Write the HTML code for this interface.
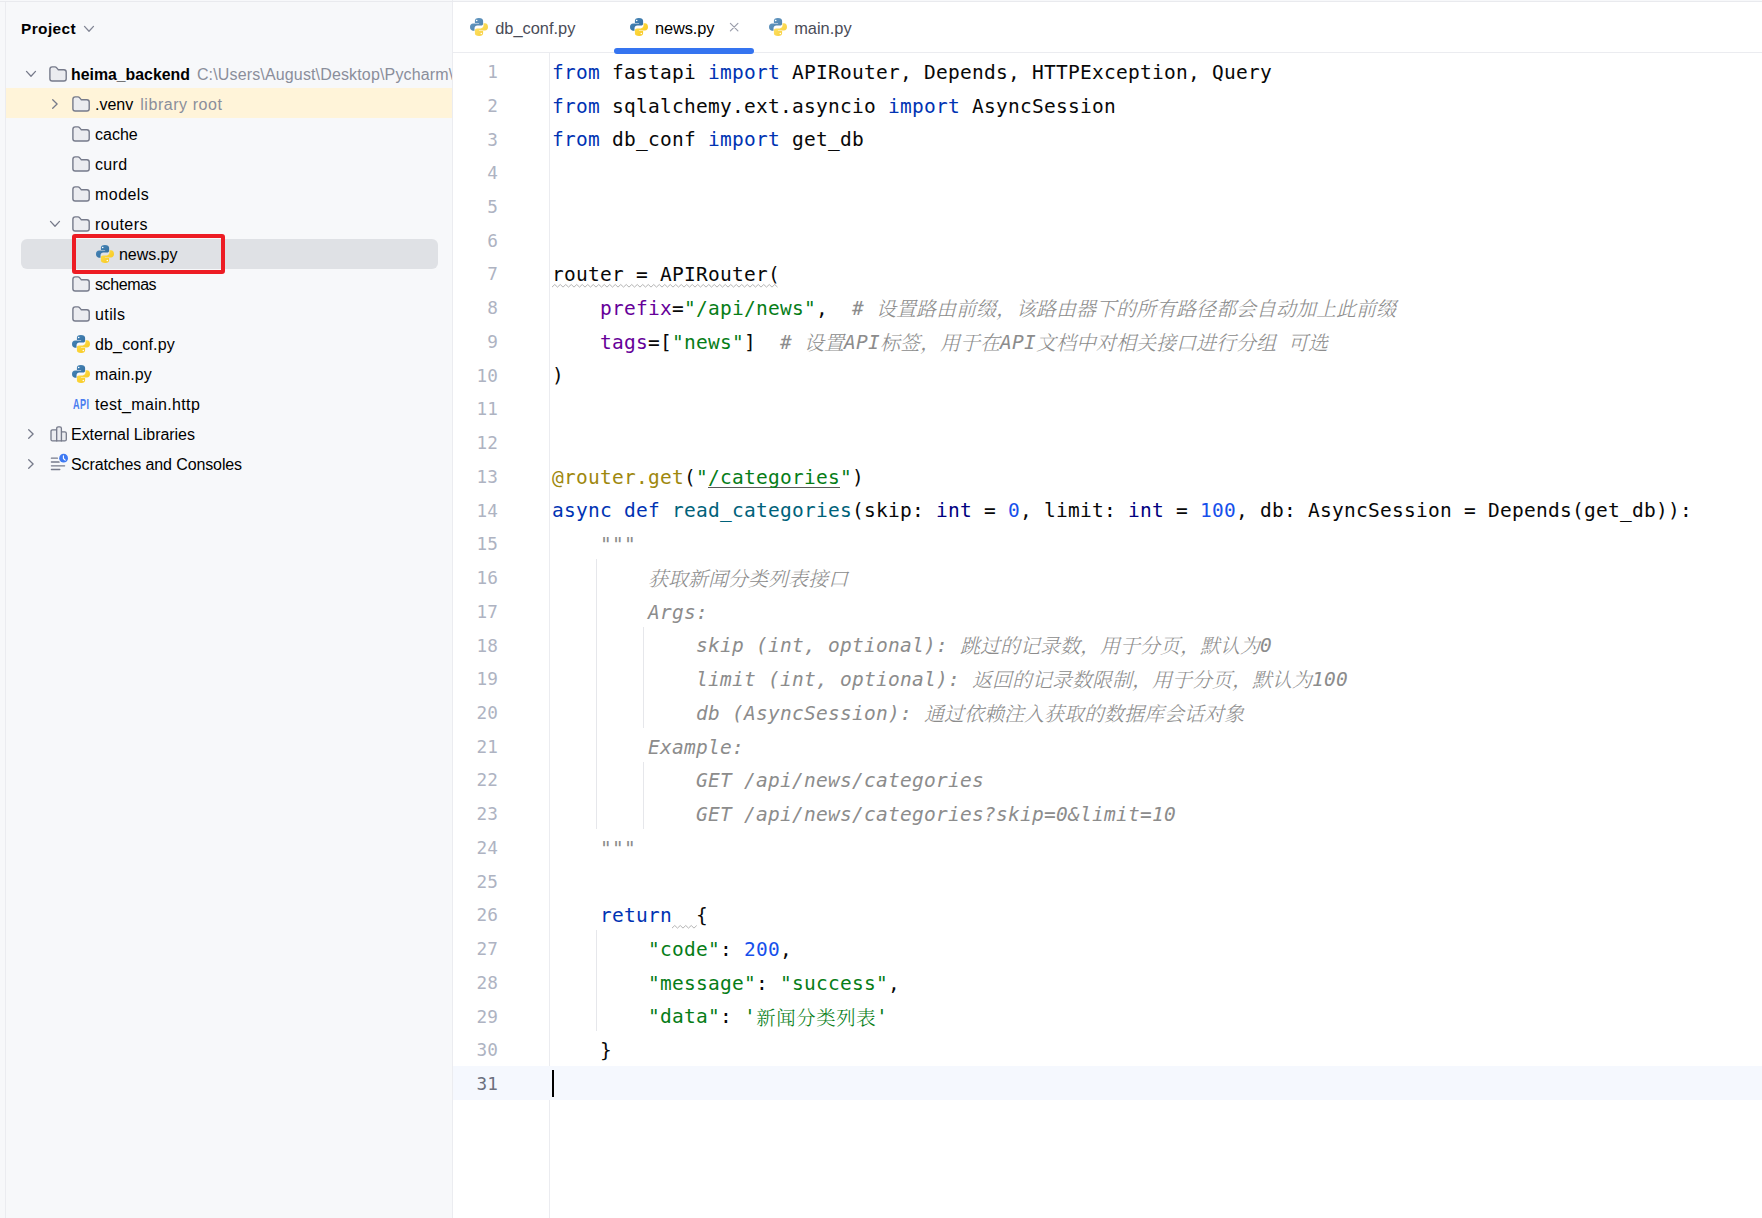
<!DOCTYPE html>
<html lang="zh"><head><meta charset="utf-8"><title>news.py</title>
<style>
*{box-sizing:border-box;margin:0;padding:0}
html,body{width:1762px;height:1218px;overflow:hidden;background:#f7f8fa}
body{position:relative;font-family:"Liberation Sans","Noto Sans CJK SC",sans-serif;color:#000}
#side{position:absolute;left:0;top:0;width:453px;height:1218px;background:#f7f8fa;overflow:hidden}
#side .lb{position:absolute;left:5px;top:2px;width:1px;height:1216px;background:#ebecf0}
#topline{position:absolute;left:0;top:1px;width:1762px;height:1px;background:#e9eaee;z-index:5}
#split{position:absolute;left:452px;top:0;width:1px;height:1218px;background:#ebecf0}
.hdr{position:absolute;left:21px;top:14.2px;font-size:15.4px;font-weight:bold;line-height:30px;letter-spacing:0.42px}
.venv{position:absolute;left:6px;top:88px;width:446px;height:30px;background:#fff4d9}
.sel{position:absolute;left:21px;top:238.5px;width:417px;height:30px;background:#dfe1e5;border-radius:6px}
.red{position:absolute;left:72px;top:234px;width:152.8px;height:40px;border:4px solid #ed1c24;border-radius:3px}
.ic{position:absolute;display:block;overflow:visible}
.tt{position:absolute;font-size:16px;line-height:30px;white-space:nowrap;height:30px}
.tt b{font-weight:bold;font-size:15.85px}
.gr{color:#8a8e9b}
.api{position:absolute;font-size:14.7px;line-height:20px;color:#4a7df0;transform:scaleX(0.62);transform-origin:0 50%;font-weight:bold;letter-spacing:0.6px}
#ed{position:absolute;left:453px;top:2px;width:1309px;height:1216px;background:#fff}
#tabs{position:absolute;left:453px;top:2px;width:1309px;height:51px;border-bottom:1px solid #ebecf0;background:#fff}
.tab{position:absolute;top:13.4px;font-size:16.4px;line-height:30px;color:#494b57;white-space:nowrap}
.tab.act{color:#000}
.ul{position:absolute;left:613.5px;top:48px;width:140.5px;height:6px;border-radius:3px;background:#3574f0}
#gl{position:absolute;left:549px;top:53px;width:1px;height:1165px;background:#ebecf0}
.curline{position:absolute;left:453px;top:1066px;width:1309px;height:33.7px;background:#f5f8fe}
.caret{position:absolute;left:552px;top:1070px;width:2px;height:26.5px;background:#000}
.ln{position:absolute;left:453px;width:45.1px;text-align:right;font-family:"DejaVu Sans Mono","Liberation Mono",monospace;font-size:17.7px;letter-spacing:0.15px;line-height:33.733px;height:33.733px;color:#aeb3c2}
.ln.cur{color:#6c707e}
.cl{position:absolute;left:552px;font-family:"DejaVu Sans Mono","Liberation Mono",monospace;font-size:19.5px;letter-spacing:0.2600px;line-height:33.733px;height:33.733px;white-space:pre;color:#080808}
.k{color:#0033b3}.s,.su{color:#067d17}.su{text-decoration:underline #5a5a5a;text-decoration-thickness:1px;text-underline-offset:3px;text-decoration-skip-ink:none}
.n{color:#1750eb}.d{color:#9e880d}.f{color:#00627a}.p{color:#660099}.b{color:#000080}
.c{color:#8c8c8c;font-style:italic}
.z{color:#8c8c8c;font-style:italic;font-family:"Liberation Serif","Noto Serif CJK SC",serif;font-size:20px;letter-spacing:0;line-height:0;position:relative;top:1.4px;font-weight:300}
.g{color:#067d17;font-family:"Liberation Serif","Noto Serif CJK SC",serif;font-size:19.4px;letter-spacing:0.6px;line-height:0;position:relative;top:2px;left:0.3px;font-weight:300}
.guide{position:absolute;width:1px;background:#e6e7eb}
</style></head><body>
<svg width="0" height="0" style="position:absolute"><defs>
<linearGradient id="pyb" x1="0" y1="0" x2="1" y2="1"><stop offset="0" stop-color="#4b8bbe"/><stop offset="1" stop-color="#306998"/></linearGradient>
<linearGradient id="pyy" x1="0" y1="0" x2="1" y2="1"><stop offset="0" stop-color="#ffe052"/><stop offset="1" stop-color="#f6c416"/></linearGradient>
</defs></svg>
<div id="side">
<div class="lb"></div>
<div class="hdr">Project</div>
<svg class="ic" style="left:81.5px;top:22px" width="14" height="14" viewBox="0 0 14 14"><path d="M2.5 4.4 L7 9.2 L11.5 4.4" fill="none" stroke="#818594" stroke-width="1.3" stroke-linecap="round" stroke-linejoin="round"/></svg>
<div class="venv"></div>
<div class="sel"></div>
<svg class="ic" style="left:24px;top:67px" width="14" height="14" viewBox="0 0 14 14"><path d="M2.5 4.4 L7 9.2 L11.5 4.4" fill="none" stroke="#767a8a" stroke-width="1.3" stroke-linecap="round" stroke-linejoin="round"/></svg>
<svg class="ic" style="left:49px;top:65px" width="18" height="18" viewBox="0 0 18 18"><path d="M0.9 4.2 Q0.9 1.9 3.2 1.9 H6 Q6.9 1.9 7.5 2.6 L9 4.4 Q9.3 4.7 9.8 4.7 H14.9 Q17.2 4.7 17.2 7 V13.7 Q17.2 16 14.9 16 H3.2 Q0.9 16 0.9 13.7 Z" fill="#ebecf0" stroke="#767a8a" stroke-width="1.4"/></svg>
<div class="tt" style="left:71px;top:60px"><b>heima_backend</b><span class="gr" style="margin-left:7px;letter-spacing:0.15px">C:\Users\August\Desktop\Pycharm\</span></div>
<svg class="ic" style="left:47.9px;top:97px" width="14" height="14" viewBox="0 0 14 14"><path d="M4.7 2.7 L9.1 7 L4.7 11.3" fill="none" stroke="#767a8a" stroke-width="1.3" stroke-linecap="round" stroke-linejoin="round"/></svg>
<svg class="ic" style="left:72px;top:95px" width="18" height="18" viewBox="0 0 18 18"><path d="M0.9 4.2 Q0.9 1.9 3.2 1.9 H6 Q6.9 1.9 7.5 2.6 L9 4.4 Q9.3 4.7 9.8 4.7 H14.9 Q17.2 4.7 17.2 7 V13.7 Q17.2 16 14.9 16 H3.2 Q0.9 16 0.9 13.7 Z" fill="#ebecf0" stroke="#767a8a" stroke-width="1.4"/></svg>
<div class="tt" style="left:95px;top:90px">.venv<span class="gr" style="margin-left:7px;letter-spacing:0.55px">library root</span></div>
<svg class="ic" style="left:72px;top:125px" width="18" height="18" viewBox="0 0 18 18"><path d="M0.9 4.2 Q0.9 1.9 3.2 1.9 H6 Q6.9 1.9 7.5 2.6 L9 4.4 Q9.3 4.7 9.8 4.7 H14.9 Q17.2 4.7 17.2 7 V13.7 Q17.2 16 14.9 16 H3.2 Q0.9 16 0.9 13.7 Z" fill="#ebecf0" stroke="#767a8a" stroke-width="1.4"/></svg>
<div class="tt" style="left:95px;top:120px">cache</div>
<svg class="ic" style="left:72px;top:155px" width="18" height="18" viewBox="0 0 18 18"><path d="M0.9 4.2 Q0.9 1.9 3.2 1.9 H6 Q6.9 1.9 7.5 2.6 L9 4.4 Q9.3 4.7 9.8 4.7 H14.9 Q17.2 4.7 17.2 7 V13.7 Q17.2 16 14.9 16 H3.2 Q0.9 16 0.9 13.7 Z" fill="#ebecf0" stroke="#767a8a" stroke-width="1.4"/></svg>
<div class="tt" style="left:95px;top:150px;letter-spacing:0.3px">curd</div>
<svg class="ic" style="left:72px;top:185px" width="18" height="18" viewBox="0 0 18 18"><path d="M0.9 4.2 Q0.9 1.9 3.2 1.9 H6 Q6.9 1.9 7.5 2.6 L9 4.4 Q9.3 4.7 9.8 4.7 H14.9 Q17.2 4.7 17.2 7 V13.7 Q17.2 16 14.9 16 H3.2 Q0.9 16 0.9 13.7 Z" fill="#ebecf0" stroke="#767a8a" stroke-width="1.4"/></svg>
<div class="tt" style="left:95px;top:180px;letter-spacing:0.45px">models</div>
<svg class="ic" style="left:48.1px;top:217px" width="14" height="14" viewBox="0 0 14 14"><path d="M2.5 4.4 L7 9.2 L11.5 4.4" fill="none" stroke="#767a8a" stroke-width="1.3" stroke-linecap="round" stroke-linejoin="round"/></svg>
<svg class="ic" style="left:72px;top:215px" width="18" height="18" viewBox="0 0 18 18"><path d="M0.9 4.2 Q0.9 1.9 3.2 1.9 H6 Q6.9 1.9 7.5 2.6 L9 4.4 Q9.3 4.7 9.8 4.7 H14.9 Q17.2 4.7 17.2 7 V13.7 Q17.2 16 14.9 16 H3.2 Q0.9 16 0.9 13.7 Z" fill="#ebecf0" stroke="#767a8a" stroke-width="1.4"/></svg>
<div class="tt" style="left:95px;top:210px;letter-spacing:0.45px">routers</div>
<svg class="ic" style="left:96px;top:245px;opacity:1" width="18" height="18" viewBox="0 0 18 18"><path d="M8.9 0 C6 0 4.9 1.2 4.9 2.8 V4.9 H9.1 V5.6 H3.1 C1.2 5.6 0 7 0 9.1 C0 11.2 1.1 12.7 2.9 12.7 H4.5 V10.4 C4.5 8.8 5.8 7.6 7.3 7.6 H11 C12.3 7.6 13.1 6.7 13.1 5.4 V2.8 C13.1 1.1 11.7 0 8.9 0 Z" fill="url(#pyb)"/><path d="M9.1 18 C12 18 13.1 16.8 13.1 15.2 V13.1 H8.9 V12.4 H14.9 C16.8 12.4 18 11 18 8.9 C18 6.8 16.9 5.3 15.1 5.3 H13.5 V7.6 C13.5 9.2 12.2 10.4 10.7 10.4 H7 C5.7 10.4 4.9 11.3 4.9 12.6 V15.2 C4.9 16.9 6.3 18 9.1 18 Z" fill="url(#pyy)"/><circle cx="6.7" cy="2.5" r="0.8" fill="#fff"/><circle cx="11.3" cy="15.5" r="0.8" fill="#fff"/></svg>
<div class="tt" style="left:119px;top:240px;letter-spacing:-0.05px">news.py</div>
<svg class="ic" style="left:72px;top:275px" width="18" height="18" viewBox="0 0 18 18"><path d="M0.9 4.2 Q0.9 1.9 3.2 1.9 H6 Q6.9 1.9 7.5 2.6 L9 4.4 Q9.3 4.7 9.8 4.7 H14.9 Q17.2 4.7 17.2 7 V13.7 Q17.2 16 14.9 16 H3.2 Q0.9 16 0.9 13.7 Z" fill="#ebecf0" stroke="#767a8a" stroke-width="1.4"/></svg>
<div class="tt" style="left:95px;top:270px;letter-spacing:-0.4px">schemas</div>
<svg class="ic" style="left:72px;top:305px" width="18" height="18" viewBox="0 0 18 18"><path d="M0.9 4.2 Q0.9 1.9 3.2 1.9 H6 Q6.9 1.9 7.5 2.6 L9 4.4 Q9.3 4.7 9.8 4.7 H14.9 Q17.2 4.7 17.2 7 V13.7 Q17.2 16 14.9 16 H3.2 Q0.9 16 0.9 13.7 Z" fill="#ebecf0" stroke="#767a8a" stroke-width="1.4"/></svg>
<div class="tt" style="left:95px;top:300px;letter-spacing:0.4px">utils</div>
<svg class="ic" style="left:72px;top:335px;opacity:1" width="18" height="18" viewBox="0 0 18 18"><path d="M8.9 0 C6 0 4.9 1.2 4.9 2.8 V4.9 H9.1 V5.6 H3.1 C1.2 5.6 0 7 0 9.1 C0 11.2 1.1 12.7 2.9 12.7 H4.5 V10.4 C4.5 8.8 5.8 7.6 7.3 7.6 H11 C12.3 7.6 13.1 6.7 13.1 5.4 V2.8 C13.1 1.1 11.7 0 8.9 0 Z" fill="url(#pyb)"/><path d="M9.1 18 C12 18 13.1 16.8 13.1 15.2 V13.1 H8.9 V12.4 H14.9 C16.8 12.4 18 11 18 8.9 C18 6.8 16.9 5.3 15.1 5.3 H13.5 V7.6 C13.5 9.2 12.2 10.4 10.7 10.4 H7 C5.7 10.4 4.9 11.3 4.9 12.6 V15.2 C4.9 16.9 6.3 18 9.1 18 Z" fill="url(#pyy)"/><circle cx="6.7" cy="2.5" r="0.8" fill="#fff"/><circle cx="11.3" cy="15.5" r="0.8" fill="#fff"/></svg>
<div class="tt" style="left:95px;top:330px;letter-spacing:0.16px">db_conf.py</div>
<svg class="ic" style="left:72px;top:365px;opacity:1" width="18" height="18" viewBox="0 0 18 18"><path d="M8.9 0 C6 0 4.9 1.2 4.9 2.8 V4.9 H9.1 V5.6 H3.1 C1.2 5.6 0 7 0 9.1 C0 11.2 1.1 12.7 2.9 12.7 H4.5 V10.4 C4.5 8.8 5.8 7.6 7.3 7.6 H11 C12.3 7.6 13.1 6.7 13.1 5.4 V2.8 C13.1 1.1 11.7 0 8.9 0 Z" fill="url(#pyb)"/><path d="M9.1 18 C12 18 13.1 16.8 13.1 15.2 V13.1 H8.9 V12.4 H14.9 C16.8 12.4 18 11 18 8.9 C18 6.8 16.9 5.3 15.1 5.3 H13.5 V7.6 C13.5 9.2 12.2 10.4 10.7 10.4 H7 C5.7 10.4 4.9 11.3 4.9 12.6 V15.2 C4.9 16.9 6.3 18 9.1 18 Z" fill="url(#pyy)"/><circle cx="6.7" cy="2.5" r="0.8" fill="#fff"/><circle cx="11.3" cy="15.5" r="0.8" fill="#fff"/></svg>
<div class="tt" style="left:95px;top:360px;letter-spacing:0.13px">main.py</div>
<div class="api" style="left:73.3px;top:394.3px">API</div>
<div class="tt" style="left:95px;top:390px;letter-spacing:0.33px">test_main.http</div>
<svg class="ic" style="left:23.6px;top:427px" width="14" height="14" viewBox="0 0 14 14"><path d="M4.7 2.7 L9.1 7 L4.7 11.3" fill="none" stroke="#767a8a" stroke-width="1.3" stroke-linecap="round" stroke-linejoin="round"/></svg>
<svg class="ic" style="left:49px;top:425px" width="18" height="18" viewBox="0 0 18 18"><g fill="#ebecf0" stroke="#767a8a" stroke-width="1.3" stroke-linejoin="round"><path d="M7.7 4.9 H3.5 Q2 4.9 2 6.4 V14.4 Q2 15.9 3.5 15.9 H7.7 Z"/><path d="M12.4 6.8 H15.8 Q17.3 6.8 17.3 8.3 V14.4 Q17.3 15.9 15.8 15.9 H12.4 Z"/><path d="M7.7 15.9 V3.4 Q7.7 1.9 9.2 1.9 H10.9 Q12.4 1.9 12.4 3.4 V15.9 Z"/></g></svg>
<div class="tt" style="left:71px;top:420px;letter-spacing:-0.03px">External Libraries</div>
<svg class="ic" style="left:23.6px;top:457px" width="14" height="14" viewBox="0 0 14 14"><path d="M4.7 2.7 L9.1 7 L4.7 11.3" fill="none" stroke="#767a8a" stroke-width="1.3" stroke-linecap="round" stroke-linejoin="round"/></svg>
<svg class="ic" style="left:49px;top:455px" width="18" height="18" viewBox="0 0 18 18"><g stroke="#767a8a" stroke-width="1.3" stroke-linecap="round"><path d="M2.4 3.2H8.4M2.4 7H10.2M2.4 10.8H15.6M2.4 14.5H10.8"/></g><circle cx="14.6" cy="3.2" r="5.2" fill="#f7f8fa"/><circle cx="14.6" cy="3.2" r="4.4" fill="#3f7af3"/><path d="M14.4 0.8 V3.5 L16.2 5.2" fill="none" stroke="#fff" stroke-width="1.1" stroke-linecap="round" stroke-linejoin="round"/></svg>
<div class="tt" style="left:71px;top:450px;letter-spacing:-0.11px">Scratches and Consoles</div>
<div class="red"></div>
</div>
<div id="split"></div>
<div id="ed"></div>
<div id="tabs"></div>
<svg class="ic" style="left:470px;top:18px;opacity:0.85" width="18" height="18" viewBox="0 0 18 18"><path d="M8.9 0 C6 0 4.9 1.2 4.9 2.8 V4.9 H9.1 V5.6 H3.1 C1.2 5.6 0 7 0 9.1 C0 11.2 1.1 12.7 2.9 12.7 H4.5 V10.4 C4.5 8.8 5.8 7.6 7.3 7.6 H11 C12.3 7.6 13.1 6.7 13.1 5.4 V2.8 C13.1 1.1 11.7 0 8.9 0 Z" fill="url(#pyb)"/><path d="M9.1 18 C12 18 13.1 16.8 13.1 15.2 V13.1 H8.9 V12.4 H14.9 C16.8 12.4 18 11 18 8.9 C18 6.8 16.9 5.3 15.1 5.3 H13.5 V7.6 C13.5 9.2 12.2 10.4 10.7 10.4 H7 C5.7 10.4 4.9 11.3 4.9 12.6 V15.2 C4.9 16.9 6.3 18 9.1 18 Z" fill="url(#pyy)"/><circle cx="6.7" cy="2.5" r="0.8" fill="#fff"/><circle cx="11.3" cy="15.5" r="0.8" fill="#fff"/></svg>
<div class="tab" style="left:495.2px">db_conf.py</div>
<svg class="ic" style="left:630px;top:18px;opacity:1" width="18" height="18" viewBox="0 0 18 18"><path d="M8.9 0 C6 0 4.9 1.2 4.9 2.8 V4.9 H9.1 V5.6 H3.1 C1.2 5.6 0 7 0 9.1 C0 11.2 1.1 12.7 2.9 12.7 H4.5 V10.4 C4.5 8.8 5.8 7.6 7.3 7.6 H11 C12.3 7.6 13.1 6.7 13.1 5.4 V2.8 C13.1 1.1 11.7 0 8.9 0 Z" fill="url(#pyb)"/><path d="M9.1 18 C12 18 13.1 16.8 13.1 15.2 V13.1 H8.9 V12.4 H14.9 C16.8 12.4 18 11 18 8.9 C18 6.8 16.9 5.3 15.1 5.3 H13.5 V7.6 C13.5 9.2 12.2 10.4 10.7 10.4 H7 C5.7 10.4 4.9 11.3 4.9 12.6 V15.2 C4.9 16.9 6.3 18 9.1 18 Z" fill="url(#pyy)"/><circle cx="6.7" cy="2.5" r="0.8" fill="#fff"/><circle cx="11.3" cy="15.5" r="0.8" fill="#fff"/></svg>
<div class="tab act" style="left:655px;letter-spacing:-0.1px">news.py</div>
<svg class="ic" style="left:727px;top:20px" width="14" height="14" viewBox="0 0 14 14"><path d="M3.4 3.4 L10.9 10.9 M10.9 3.4 L3.4 10.9" fill="none" stroke="#9a9dab" stroke-width="1.2" stroke-linecap="round"/></svg>
<svg class="ic" style="left:769px;top:18px;opacity:0.85" width="18" height="18" viewBox="0 0 18 18"><path d="M8.9 0 C6 0 4.9 1.2 4.9 2.8 V4.9 H9.1 V5.6 H3.1 C1.2 5.6 0 7 0 9.1 C0 11.2 1.1 12.7 2.9 12.7 H4.5 V10.4 C4.5 8.8 5.8 7.6 7.3 7.6 H11 C12.3 7.6 13.1 6.7 13.1 5.4 V2.8 C13.1 1.1 11.7 0 8.9 0 Z" fill="url(#pyb)"/><path d="M9.1 18 C12 18 13.1 16.8 13.1 15.2 V13.1 H8.9 V12.4 H14.9 C16.8 12.4 18 11 18 8.9 C18 6.8 16.9 5.3 15.1 5.3 H13.5 V7.6 C13.5 9.2 12.2 10.4 10.7 10.4 H7 C5.7 10.4 4.9 11.3 4.9 12.6 V15.2 C4.9 16.9 6.3 18 9.1 18 Z" fill="url(#pyy)"/><circle cx="6.7" cy="2.5" r="0.8" fill="#fff"/><circle cx="11.3" cy="15.5" r="0.8" fill="#fff"/></svg>
<div class="tab" style="left:794.2px">main.py</div>
<div class="ul"></div>
<div id="gl"></div>
<div class="curline"></div>
<div class="guide" style="left:596px;top:559px;height:270px"></div>
<div class="guide" style="left:643px;top:627px;height:101px"></div>
<div class="guide" style="left:643px;top:762px;height:67px"></div>
<div class="guide" style="left:596px;top:930px;height:101px"></div>
<div class="ln" style="top:56px">1</div>
<div class="cl" style="top:56px"><span class="k">from</span> fastapi <span class="k">import</span> APIRouter, Depends, HTTPException, Query</div>
<div class="ln" style="top:90px">2</div>
<div class="cl" style="top:90px"><span class="k">from</span> sqlalchemy.ext.asyncio <span class="k">import</span> AsyncSession</div>
<div class="ln" style="top:124px">3</div>
<div class="cl" style="top:123px"><span class="k">from</span> db_conf <span class="k">import</span> get_db</div>
<div class="ln" style="top:157px">4</div>
<div class="ln" style="top:191px">5</div>
<div class="ln" style="top:225px">6</div>
<div class="ln" style="top:258px">7</div>
<div class="cl" style="top:258px">router = APIRouter(</div>
<div class="ln" style="top:292px">8</div>
<div class="cl" style="top:292px">    <span class="p">prefix</span>=<span class="s">"/api/news"</span>,  <span class="c"># </span><span class="z">设置路由前缀，该路由器下的所有路径都会自动加上此前缀</span></div>
<div class="ln" style="top:326px">9</div>
<div class="cl" style="top:326px">    <span class="p">tags</span>=[<span class="s">"news"</span>]  <span class="c"># </span><span class="z">设置</span><span class="c">API</span><span class="z">标签，用于在</span><span class="c">API</span><span class="z">文档中对相关接口进行分组</span><span class="c"> </span><span class="z">可选</span></div>
<div class="ln" style="top:360px">10</div>
<div class="cl" style="top:359px">)</div>
<div class="ln" style="top:393px">11</div>
<div class="ln" style="top:427px">12</div>
<div class="ln" style="top:461px">13</div>
<div class="cl" style="top:461px"><span class="d">@router.get</span>(<span class="s">"</span><span class="su">/categories</span><span class="s">"</span>)</div>
<div class="ln" style="top:495px">14</div>
<div class="cl" style="top:494px"><span class="k">async def </span><span class="f">read_categories</span>(skip: <span class="b">int</span> = <span class="n">0</span>, limit: <span class="b">int</span> = <span class="n">100</span>, db: AsyncSession = Depends(get_db)):</div>
<div class="ln" style="top:528px">15</div>
<div class="cl" style="top:528px">    <span class="c">"""</span></div>
<div class="ln" style="top:562px">16</div>
<div class="cl" style="top:562px">        <span class="z">获取新闻分类列表接口</span></div>
<div class="ln" style="top:596px">17</div>
<div class="cl" style="top:596px">        <span class="c">Args:</span></div>
<div class="ln" style="top:630px">18</div>
<div class="cl" style="top:629px">            <span class="c">skip (int, optional): </span><span class="z">跳过的记录数，用于分页，默认为</span><span class="c">0</span></div>
<div class="ln" style="top:663px">19</div>
<div class="cl" style="top:663px">            <span class="c">limit (int, optional): </span><span class="z">返回的记录数限制，用于分页，默认为</span><span class="c">100</span></div>
<div class="ln" style="top:697px">20</div>
<div class="cl" style="top:697px">            <span class="c">db (AsyncSession): </span><span class="z">通过依赖注入获取的数据库会话对象</span></div>
<div class="ln" style="top:731px">21</div>
<div class="cl" style="top:731px">        <span class="c">Example:</span></div>
<div class="ln" style="top:764px">22</div>
<div class="cl" style="top:764px">            <span class="c">GET /api/news/categories</span></div>
<div class="ln" style="top:798px">23</div>
<div class="cl" style="top:798px">            <span class="c">GET /api/news/categories?skip=0&amp;limit=10</span></div>
<div class="ln" style="top:832px">24</div>
<div class="cl" style="top:832px">    <span class="c">"""</span></div>
<div class="ln" style="top:866px">25</div>
<div class="ln" style="top:899px">26</div>
<div class="cl" style="top:899px">    <span class="k">return</span>  {</div>
<div class="ln" style="top:933px">27</div>
<div class="cl" style="top:933px">        <span class="s">"code"</span>: <span class="n">200</span>,</div>
<div class="ln" style="top:967px">28</div>
<div class="cl" style="top:967px">        <span class="s">"message"</span>: <span class="s">"success"</span>,</div>
<div class="ln" style="top:1001px">29</div>
<div class="cl" style="top:1000px">        <span class="s">"data"</span>: <span class="s">'</span><span class="g">新闻分类列表</span><span class="s">'</span></div>
<div class="ln" style="top:1034px">30</div>
<div class="cl" style="top:1034px">    }</div>
<div class="ln cur" style="top:1068px">31</div>
<svg class="ic" style="left:552px;top:284.3px" width="227.5" height="4" viewBox="0 0 227.5 4"><polyline points="0.00,3.1 2.75,0.5 5.50,3.1 8.25,0.5 11.00,3.1 13.75,0.5 16.50,3.1 19.25,0.5 22.00,3.1 24.75,0.5 27.50,3.1 30.25,0.5 33.00,3.1 35.75,0.5 38.50,3.1 41.25,0.5 44.00,3.1 46.75,0.5 49.50,3.1 52.25,0.5 55.00,3.1 57.75,0.5 60.50,3.1 63.25,0.5 66.00,3.1 68.75,0.5 71.50,3.1 74.25,0.5 77.00,3.1 79.75,0.5 82.50,3.1 85.25,0.5 88.00,3.1 90.75,0.5 93.50,3.1 96.25,0.5 99.00,3.1 101.75,0.5 104.50,3.1 107.25,0.5 110.00,3.1 112.75,0.5 115.50,3.1 118.25,0.5 121.00,3.1 123.75,0.5 126.50,3.1 129.25,0.5 132.00,3.1 134.75,0.5 137.50,3.1 140.25,0.5 143.00,3.1 145.75,0.5 148.50,3.1 151.25,0.5 154.00,3.1 156.75,0.5 159.50,3.1 162.25,0.5 165.00,3.1 167.75,0.5 170.50,3.1 173.25,0.5 176.00,3.1 178.75,0.5 181.50,3.1 184.25,0.5 187.00,3.1 189.75,0.5 192.50,3.1 195.25,0.5 198.00,3.1 200.75,0.5 203.50,3.1 206.25,0.5 209.00,3.1 211.75,0.5 214.50,3.1 217.25,0.5 220.00,3.1 222.75,0.5 225.50,3.1" fill="none" stroke="#b4b4b4" stroke-width="1"/></svg>
<svg class="ic" style="left:672px;top:925.2px" width="24.799999999999955" height="4" viewBox="0 0 24.799999999999955 4"><polyline points="0.00,3.1 2.75,0.5 5.50,3.1 8.25,0.5 11.00,3.1 13.75,0.5 16.50,3.1 19.25,0.5 22.00,3.1 24.75,0.5" fill="none" stroke="#b4b4b4" stroke-width="1"/></svg>
<div class="caret"></div>
<div id="topline"></div>
</body></html>
